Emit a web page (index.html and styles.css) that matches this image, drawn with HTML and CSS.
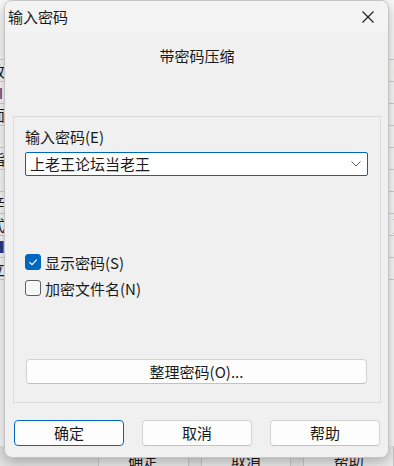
FILE: index.html
```
<!DOCTYPE html>
<html lang="zh-CN">
<head>
    <meta charset="UTF-8">
    <meta name="viewport" content="width=device-width, initial-scale=1.0">
    <title>输入密码</title>
    <link rel="stylesheet" href="styles.css">
</head>
<body>
    <div class="backdrop">
        <div class="bg-list">
            <div class="bg-row"></div>
            <div class="bg-row"><span class="bg-text">改</span><span class="bg-end">(</span></div>
            <div class="bg-row"><span class="bg-text bg-blue">III</span></div>
            <div class="bg-row"><span class="bg-text">面</span></div>
            <div class="bg-row"></div>
            <div class="bg-row"><span class="bg-text">指</span></div>
            <div class="bg-row"><span class="bg-text">A</span></div>
            <div class="bg-row"><span class="bg-text">辛</span></div>
            <div class="bg-row"><span class="bg-text">式</span><span class="bg-end">)</span></div>
            <div class="bg-row"><span class="bg-text bg-blue">■</span></div>
            <div class="bg-row"><span class="bg-text">立</span></div>
        </div>
        <div class="bg-buttons">
            <span class="bg-btn">确定</span>
            <span class="bg-btn">取消</span>
            <span class="bg-btn">帮助</span>
        </div>
    </div>

    <div class="dialog">
        <div class="titlebar">
            <span class="title">输入密码</span>
            <span class="close">
                <svg width="14" height="14" viewBox="0 0 14 14">
                    <path d="M1.5 1.5 L12.5 12.5 M12.5 1.5 L1.5 12.5" stroke="#1a1a1a" stroke-width="1.1" fill="none"/>
                </svg>
            </span>
        </div>
        <div class="dialog-body">
            <div class="subtitle">带密码压缩</div>
            <div class="group">
                <div class="field-label">输入密码(E)</div>
                <div class="combo">
                    <span class="combo-text">上老王论坛当老王</span>
                    <svg class="chevron" width="12" height="8" viewBox="0 0 12 8">
                        <path d="M1.5 1.5 L6 6 L10.5 1.5" stroke="#5a5a5a" stroke-width="1" fill="none"/>
                    </svg>
                </div>
                <div class="checks">
                    <div class="check-row">
                        <span class="box checked">
                            <svg width="12" height="12" viewBox="0 0 12 12">
                                <path d="M2.5 6.2 L5 8.6 L9.8 3.6" stroke="#fff" stroke-width="1.2" fill="none"/>
                            </svg>
                        </span>
                        <span>显示密码(S)</span>
                    </div>
                    <div class="check-row">
                        <span class="box"></span>
                        <span>加密文件名(N)</span>
                    </div>
                </div>
                <button class="btn wide">整理密码(O)...</button>
            </div>
            <div class="footer">
                <button class="btn default">确定</button>
                <button class="btn">取消</button>
                <button class="btn">帮助</button>
            </div>
        </div>
    </div>
</body>
</html>
```

FILE: styles.css
```
body {
    font-family: "Noto Sans CJK SC", "Microsoft YaHei", sans-serif;
    font-size: 15px;
    color: #1a1a1a;
    margin: 0;
    padding: 0;
    width: 394px;
    height: 466px;
    overflow: hidden;
    position: relative;
    background-color: #fafafa;
}

.backdrop {
    height: 466px;
    display: flex;
    flex-direction: column;
}

.bg-list {
    padding-top: 38px;
    display: flex;
    flex-direction: column;
}

.bg-row {
    height: 21px;
    border-bottom: 1px solid #cfcfcf;
    display: flex;
    align-items: center;
    justify-content: space-between;
    line-height: 21px;
}

.bg-text {
    margin-left: -10px;
}

.bg-blue {
    color: #2a3a8a;
}

.bg-end {
    margin-right: -4px;
}

.bg-buttons {
    margin-top: auto;
    height: 20px;
    background-color: #e4e4e4;
    display: flex;
    padding-left: 98px;
    gap: 12px;
}

.bg-btn {
    width: 110px;
    border-left: 1px solid #c8c8c8;
    border-right: 1px solid #c8c8c8;
    background-color: #ececec;
    text-align: center;
    line-height: 28px;
}

.dialog {
    position: absolute;
    left: 4px;
    top: 0;
    width: 385px;
    height: 458px;
    background-color: #f0f0f0;
    border: 1px solid #c4c4c4;
    box-sizing: border-box;
    border-radius: 8px;
    box-shadow: 0 4px 14px rgba(0, 0, 0, 0.28);
    overflow: hidden;
    display: flex;
    flex-direction: column;
}

.titlebar {
    height: 31px;
    background-color: #f3f3f3;
    display: flex;
    align-items: center;
    justify-content: space-between;
    padding-left: 3px;
}

.title {
    line-height: 20px;
}

.close {
    width: 46px;
    height: 31px;
    display: flex;
    align-items: center;
    justify-content: center;
    margin-right: -3px;
}

.dialog-body {
    flex: 1;
    display: flex;
    flex-direction: column;
    padding: 0 7px 0 8px;
}

.subtitle {
    margin-top: 14px;
    line-height: 20px;
    text-align: center;
}

.group {
    margin-top: 50px;
    height: 287px;
    box-sizing: border-box;
    border: 1px solid #dadada;
    padding: 10px 12px 0 11px;
    display: flex;
    flex-direction: column;
}

.field-label {
    line-height: 20px;
}

.combo {
    margin-top: 5px;
    height: 24px;
    box-sizing: border-box;
    background-color: #fff;
    border: 1px solid #0067c0;
    border-radius: 2px;
    display: flex;
    align-items: center;
    justify-content: space-between;
    padding: 0 5px 0 4px;
}

.combo-text {
    line-height: 20px;
}

.checks {
    margin-top: 76px;
    display: flex;
    flex-direction: column;
    gap: 6px;
}

.check-row {
    height: 20px;
    display: flex;
    align-items: center;
    gap: 4px;
}

.box {
    width: 16px;
    height: 16px;
    box-sizing: border-box;
    border: 1px solid #5f5f5f;
    border-radius: 3px;
    background-color: #f7f7f7;
    display: flex;
    align-items: center;
    justify-content: center;
}

.box.checked {
    background-color: #0067c0;
    border-color: #0067c0;
}

.btn {
    font-family: inherit;
    font-size: 15px;
    color: #1a1a1a;
    background-color: #fdfdfd;
    border: 1px solid #d3d3d3;
    border-bottom-color: #c2c2c2;
    border-radius: 4px;
    padding: 0;
    line-height: 20px;
}

.btn.wide {
    margin: 61px 1px 0 1px;
    height: 25px;
}

.footer {
    margin-top: 17px;
    padding-left: 1px;
    display: flex;
    gap: 18px;
}

.footer .btn {
    width: 110px;
    height: 26px;
}

.btn.default {
    border: 1px solid #0067c0;
}
```
